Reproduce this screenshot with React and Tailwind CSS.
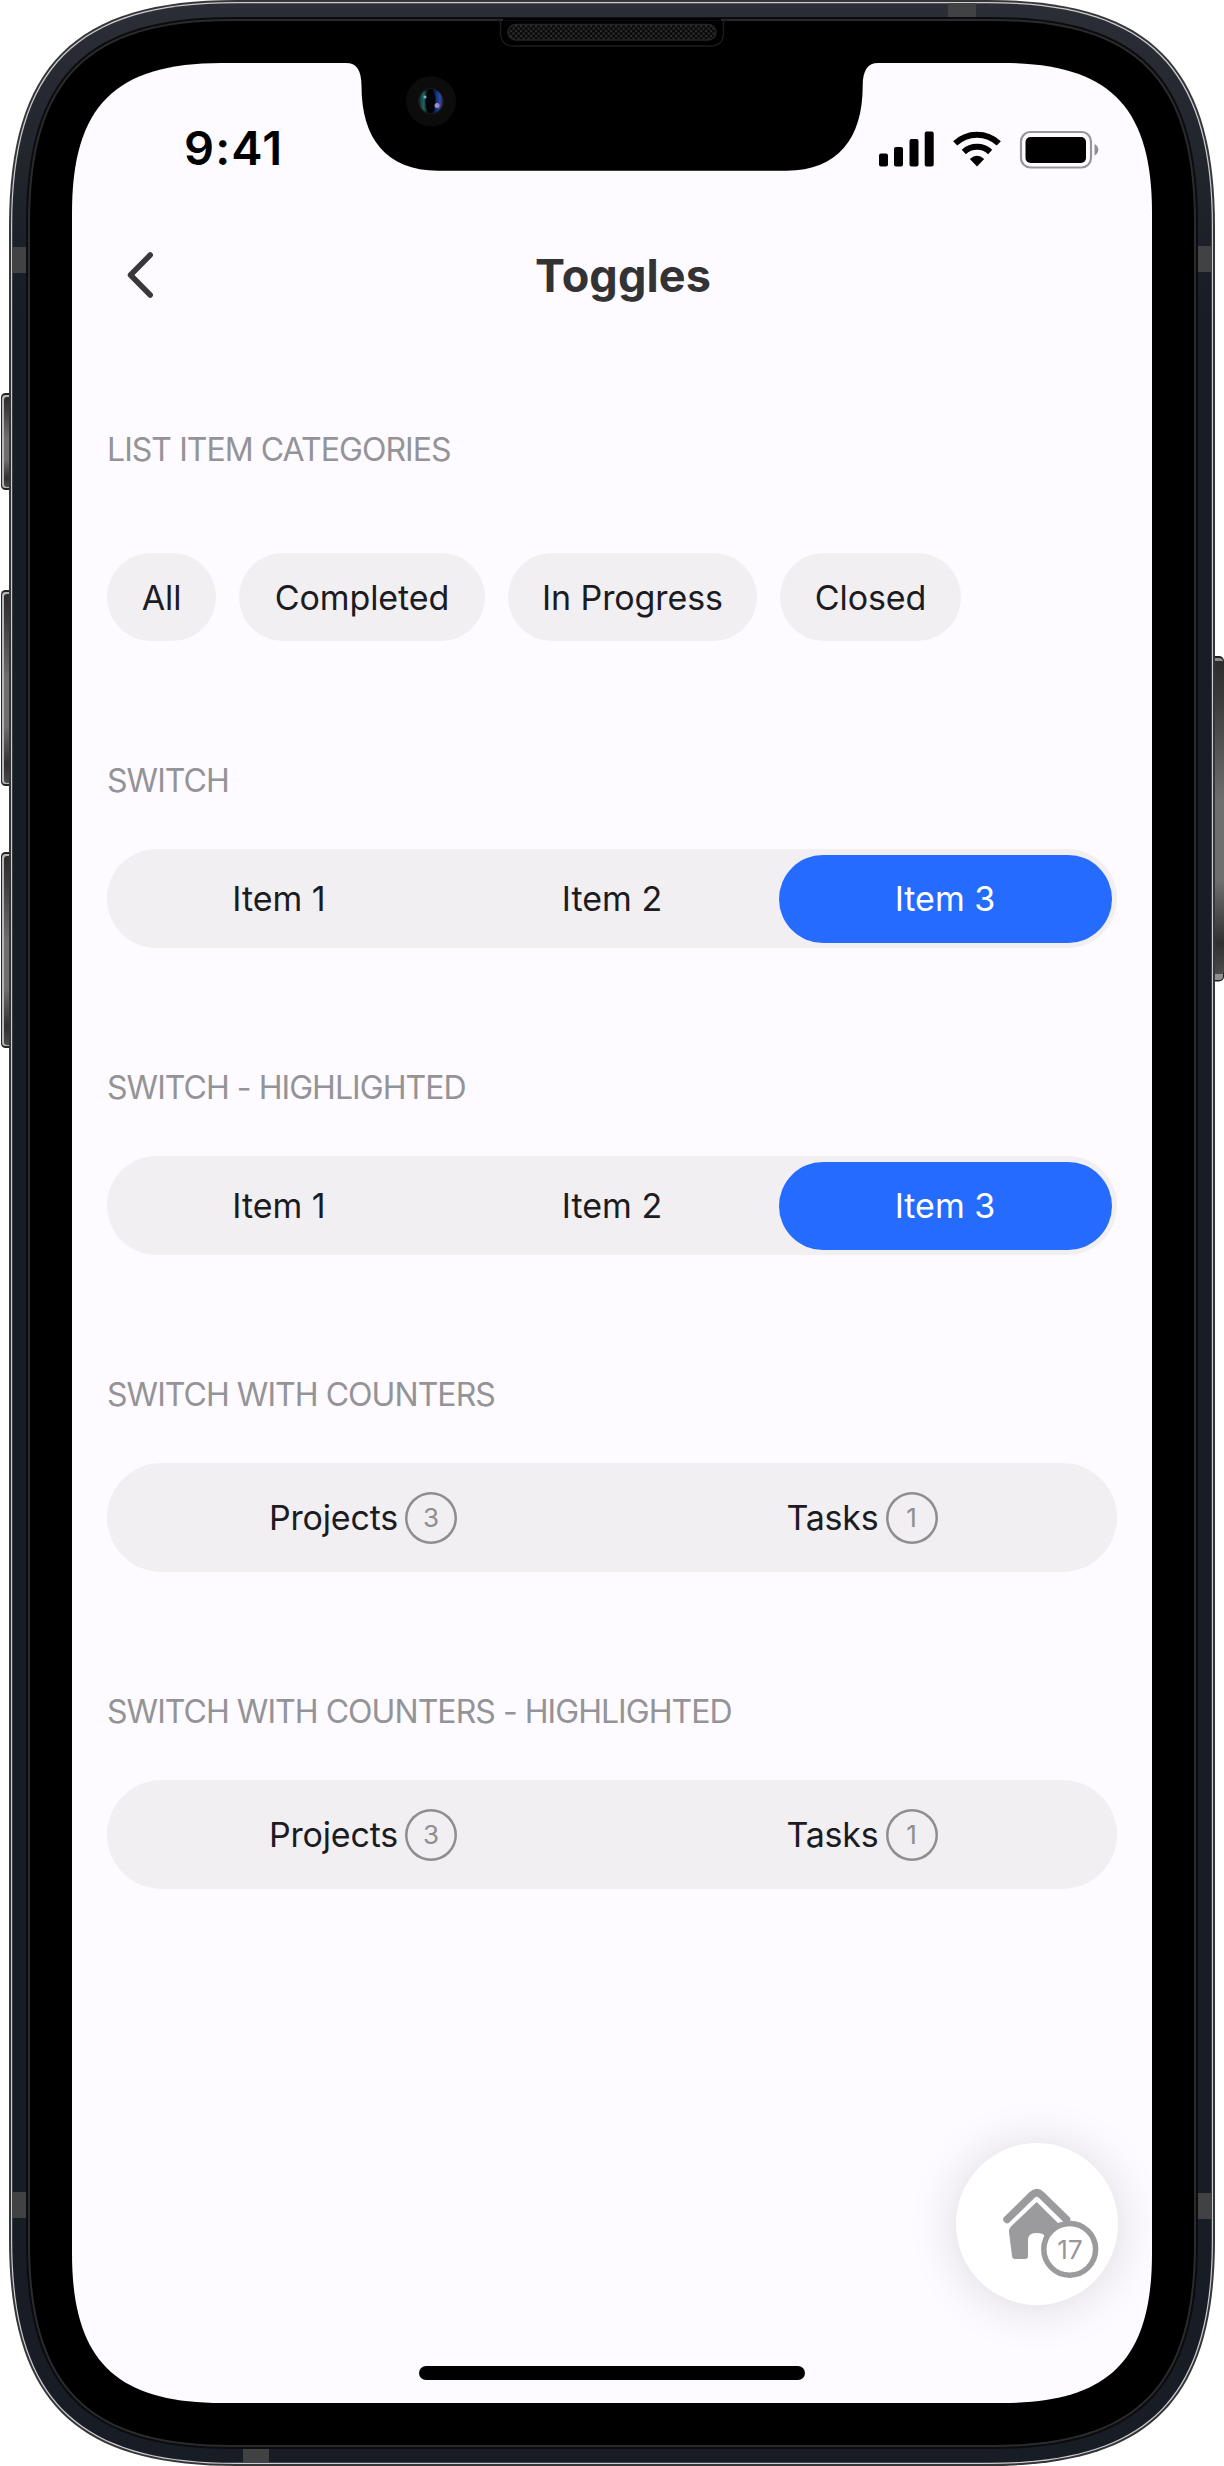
import React from "react";

// Rounded rectangle whose corners ease gently into the straight edges
function smoothRect(x, y, w, h, r) {
  const a = 1.27 * r, c = 0.365 * r;
  const X = x + w, Y = y + h;
  return [
    `M${x + a},${y}`, `L${X - a},${y}`,
    `C${X - c},${y} ${X},${y + c} ${X},${y + a}`,
    `L${X},${Y - a}`,
    `C${X},${Y - c} ${X - c},${Y} ${X - a},${Y}`,
    `L${x + a},${Y}`,
    `C${x + c},${Y} ${x},${Y - c} ${x},${Y - a}`,
    `L${x},${y + a}`,
    `C${x},${y + c} ${x + c},${y} ${x + a},${y}Z`,
  ].join(" ");
}

const SCREEN = smoothRect(72, 63, 1080, 2340, 118);

function DeviceFrame() {
  return (
    <svg className="pointer-events-none absolute inset-0" width="1224" height="2466" viewBox="0 0 1224 2466" fill="none" aria-hidden="true">
      <defs>
        <linearGradient id="metal" x1="0" y1="0" x2="0" y2="1">
          <stop offset="0" stopColor="#2c2e36" />
          <stop offset="0.07" stopColor="#20242b" />
          <stop offset="0.13" stopColor="#171c25" />
          <stop offset="1" stopColor="#171c25" />
        </linearGradient>
        <linearGradient id="key" x1="0" y1="0" x2="0" y2="1">
          <stop offset="0" stopColor="#2c2c2c" />
          <stop offset="0.12" stopColor="#3a3a3a" />
          <stop offset="0.45" stopColor="#6e6e6e" />
          <stop offset="0.7" stopColor="#6e6e6e" />
          <stop offset="0.9" stopColor="#303030" />
          <stop offset="1" stopColor="#4a4a4a" />
        </linearGradient>
        <linearGradient id="lens" x1="0" y1="0" x2="1" y2="0">
          <stop offset="0" stopColor="#17302f" />
          <stop offset="0.18" stopColor="#23635b" />
          <stop offset="0.36" stopColor="#04090a" />
          <stop offset="0.55" stopColor="#02030a" />
          <stop offset="0.72" stopColor="#0c2f7c" />
          <stop offset="0.88" stopColor="#2b48a8" />
          <stop offset="1" stopColor="#3a2a55" />
        </linearGradient>
        <pattern id="mesh" width="5" height="5" patternUnits="userSpaceOnUse">
          <rect width="5" height="5" fill="#0a0a0a" />
          <rect width="2.2" height="2.2" fill="#2c2c2c" />
          <rect x="2.5" y="2.5" width="2.2" height="2.2" fill="#2c2c2c" />
        </pattern>
        <mask id="bezelMask" maskUnits="userSpaceOnUse" x="0" y="0" width="1224" height="2466">
          <rect width="1224" height="2466" fill="#fff" />
          <path d={SCREEN} fill="#000" />
        </mask>
      </defs>

      {/* side keys */}
      {[[393, 97], [590, 196], [852, 196]].map(([y, h]) => (
        <g key={y}>
          <rect x="1" y={y} width="14" height={h} rx="4.5" fill="#252525" />
          <rect x="2" y={y + 2} width="14" height={h - 4} rx="3.5" fill="#b4b7b7" />
          <rect x="4" y={y + 4} width="14" height={h - 7} rx="3" fill="url(#key)" />
        </g>
      ))}
      <rect x="1206" y="656" width="18" height="325.5" rx="5" fill="#202020" />
      <rect x="1206" y="658" width="17" height="322" rx="4" fill="#8f8f8f" />
      <rect x="1206" y="661" width="18" height="313" rx="3" fill="url(#key)" />

      <g mask="url(#bezelMask)">
        <path d={smoothRect(9, 0, 1206, 2466, 179)} fill="#363636" />
        <path d={smoothRect(11, 2, 1202, 2462, 177)} fill="#c9ccd0" />
        <path d={smoothRect(12.2, 3.2, 1199.6, 2459.6, 176)} fill="url(#metal)" />
        <g fill="#414244">
          <rect x="12" y="247" width="15" height="26" />
          <rect x="1197" y="246" width="15" height="26" />
          <rect x="12" y="2192" width="15" height="26" />
          <rect x="1197" y="2193" width="15" height="26" />
          <rect x="948" y="3" width="28" height="15" />
          <rect x="243" y="2447" width="26" height="15" />
        </g>
        <path d={smoothRect(26, 17, 1172, 2432, 163)} fill="#0a0c10" />
        <path d={smoothRect(28, 19, 1168, 2428, 161)} fill="#2b2b2b" />
        <path d={smoothRect(30, 21, 1164, 2424, 159)} fill="#000" />
      </g>

      {/* notch */}
      <path d="M346,62 V63 C356.5,63 361.5,70 361.5,86 C361.5,138 386,170.7 438,170.7 H786.5 C838,170.7 862.7,138 862.7,86 C862.7,70 868,63 878,63 V62 Z" fill="#000" />

      {/* speaker */}
      <path d="M497,20 Q500.5,20 500.5,23 V33 Q500.5,46 514,46 H710 Q723.5,46 723.5,33 V23 Q723.5,20 727,20" stroke="#1d1d1d" strokeWidth="1.3" />
      <path d="M503,19.5 H721" stroke="#000" strokeWidth="2.5" />
      <rect x="508" y="24.5" width="208" height="15.5" rx="7.75" fill="url(#mesh)" stroke="#242424" strokeWidth="1.5" />

      {/* camera */}
      <circle cx="431" cy="101.3" r="25" fill="#0c0c0d" />
      <circle cx="431" cy="101.3" r="13" fill="#1a1b1d" />
      <ellipse cx="431" cy="101.3" rx="11.5" ry="12" fill="url(#lens)" />
      <ellipse cx="430.5" cy="101.3" rx="5" ry="12" fill="#020306" />
      <circle cx="425" cy="97" r="1.6" fill="#6fb0d8" />
      <circle cx="437" cy="105.5" r="2.5" fill="#a987c4" />
    </svg>
  );
}

function StatusIcons() {
  return (
    <svg width="222" height="40" viewBox="878 128 222 40" aria-hidden="true">
      <rect x="879" y="152.5" width="9" height="13" rx="2" />
      <rect x="894" y="146" width="9" height="19.5" rx="2" />
      <rect x="909.5" y="138" width="9" height="27.5" rx="2" />
      <rect x="924.7" y="130.5" width="9" height="35" rx="2" />
      <g fill="none" stroke="#000" strokeWidth="6">
        <path d="M955.2,142.4 A31.5,31.5 0 0 1 998.8,142.4" />
        <path d="M963.8,151 A19.5,19.5 0 0 1 990.2,151" />
      </g>
      <path d="M969.8,158 Q977,151.5 984.2,158 L977,165.6 Z" />
      <rect x="1021" y="131" width="70" height="35.5" rx="9.5" fill="none" stroke="#969598" strokeWidth="2.2" />
      <rect x="1025.5" y="136" width="60.5" height="26" rx="5" />
      <path d="M1094.5,143 Q1098.3,145 1098.3,148.7 Q1098.3,152.500 1094.5,154.5 Z" fill="#8f8e91" />
    </svg>
  );
}

function Heading({ children }) {
  return <h2 className="h-10 text-[32px] leading-[42px] font-normal tracking-[-0.95px] whitespace-nowrap text-[#949397]">{children}</h2>;
}

function Chip({ className, children }) {
  return <span className={"flex h-[88px] items-center justify-center rounded-full bg-[#f1eff2] tracking-[-0.1px] " + className}>{children}</span>;
}

function Switch() {
  return (
    <div className="grid h-[99px] w-[1010px] grid-cols-3 items-center rounded-full bg-[#f1eff2] p-[5.5px] text-center text-[34px] text-[#1c1b1f]">
      <span>Item 1</span>
      <span>Item 2</span>
      <span className="flex h-[88px] items-center justify-center rounded-full bg-[#246bfe] text-white">Item 3</span>
    </div>
  );
}

function Counter({ label, count }) {
  return (
    <div className="flex items-center justify-center gap-[7px]">
      <span className="text-[34px] tracking-[-0.2px]">{label}</span>
      <span className="flex size-[52px] items-center justify-center rounded-full text-[26px] text-[#8e8d90] shadow-[inset_0_0_0_2.5px_#8e8d90]">{count}</span>
    </div>
  );
}

function CounterSwitch() {
  return (
    <div className="flex h-[109px] w-[1010px] items-center rounded-full bg-[#f1eff2] text-[#1c1b1f]">
      <div className="w-[512px]"><Counter label="Projects" count={3} /></div>
      <div className="w-[486px]"><Counter label="Tasks" count={1} /></div>
    </div>
  );
}

function HomeButton() {
  return (
    <button className="absolute top-[2080px] left-[884px] size-[162px] rounded-full bg-white shadow-[0_2px_48px_rgba(35,30,40,0.15)]" aria-label="Home">
      <svg className="absolute inset-0" width="162" height="162" viewBox="956 2143 162 162" fill="none" aria-hidden="true">
        <path d="M1007,2219.500 L1032,2195 Q1036.700,2190.500 1041.400,2195 L1066.500,2219.500" stroke="#9b9a9d" strokeWidth="7.5" strokeLinecap="round" strokeLinejoin="round" />
        <path d="M1036.700,2202 L1061,2226 L1064.500,2230 V2256 H1046 L1044.500,2236 Q1044,2233 1036,2233 Q1028,2233 1028,2240 V2256 Q1028,2259 1025,2259 H1015 Q1012.300,2259 1012,2256 L1009,2232 Q1008.700,2229 1011,2226.500 Z" fill="#9b9a9d" />
        <circle cx="1069.7" cy="2249.3" r="25.9" fill="#fff" stroke="#9b9a9d" strokeWidth="5.5" />
      </svg>
      <span className="absolute top-[91px] left-[89px] w-[50px] text-center text-[26px] leading-[32px] text-[#97969a]">17</span>
    </button>
  );
}

export default function App() {
  return (
    <div className="relative h-[2466px] w-[1224px] overflow-hidden bg-white px-[72px] pt-[63px] font-['Inter',sans-serif]">
      <main className="relative flex h-[2340px] w-[1080px] flex-col bg-[#fdfbff]">
        <div className="flex h-[171px] items-center justify-between pr-[52px] pl-[112px]">
          <span className="pb-[2px] text-[47px] leading-none font-semibold tracking-[1.1px] text-black">9:41</span>
          <StatusIcons />
        </div>
        <header className="grid h-[83px] grid-cols-[100px_1fr_78px] items-center">
          <svg className="ml-[50px]" width="36" height="56" viewBox="0 0 36 56" fill="none" aria-hidden="true">
            <path d="M28.2,7 L8.5,27 L28.2,47" stroke="#38373a" strokeWidth="5.5" strokeLinecap="round" strokeLinejoin="round" />
          </svg>
          <h1 className="text-center text-[45px] leading-none font-bold tracking-[0.1px] text-[#333235]">Toggles</h1>
        </header>
        <div className="flex flex-col px-[35px] pt-[112px]">
          <section className="flex flex-col gap-[84px]">
            <Heading>LIST ITEM CATEGORIES</Heading>
            <div className="flex gap-[23px] text-[34px] text-[#1c1b1f]">
              <Chip className="w-[109px]">All</Chip>
              <Chip className="w-[246px]">Completed</Chip>
              <Chip className="w-[249px]">In Progress</Chip>
              <Chip className="w-[181px]">Closed</Chip>
            </div>
          </section>
          <section className="mt-[119px] flex flex-col gap-[49px]">
            <Heading>SWITCH</Heading>
            <Switch />
          </section>
          <section className="mt-[119px] flex flex-col gap-[49px]">
            <Heading>SWITCH - HIGHLIGHTED</Heading>
            <Switch />
          </section>
          <section className="mt-[119px] flex flex-col gap-[49px]">
            <Heading>SWITCH WITH COUNTERS</Heading>
            <CounterSwitch />
          </section>
          <section className="mt-[119px] flex flex-col gap-[49px]">
            <Heading>SWITCH WITH COUNTERS - HIGHLIGHTED</Heading>
            <CounterSwitch />
          </section>
        </div>
        <HomeButton />
        <div className="mx-auto mt-auto mb-[23px] h-[14px] w-[386px] rounded-full bg-black" />
      </main>
      <DeviceFrame />
    </div>
  );
}
